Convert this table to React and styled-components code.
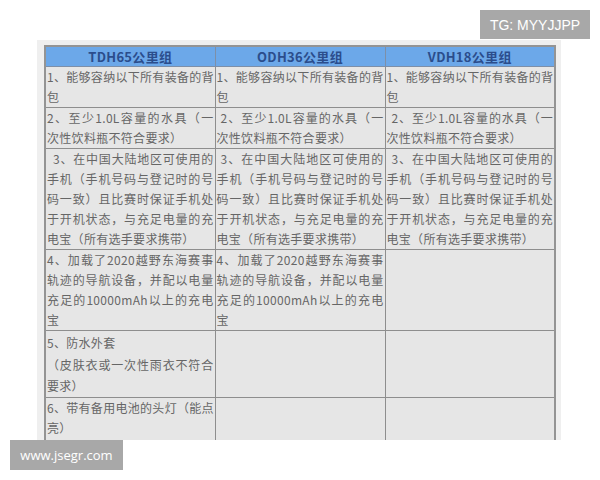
import React from "react";
import styled, { createGlobalStyle } from "styled-components";

const GlobalStyle = createGlobalStyle`
  html, body {
    margin: 0;
    padding: 0;
    background: #ffffff;
  }
  body {
    font-family: "Noto Sans CJK SC", "Noto Sans", sans-serif;
  }
`;

const columns = ["TDH65公里组", "ODH36公里组", "VDH18公里组"];

const bag = [["1、能够容纳以下所有装备的背", "包"]];
const water = [["2、至少1.0L容量的水具（一", "次性饮料瓶不符合要求）"]];
const phone = [
  [
    "3、在中国大陆地区可使用的",
    "手机（手机号码与登记时的号",
    "码一致）且比赛时保证手机处",
    "于开机状态，与充足电量的充",
    "电宝（所有选手要求携带）",
  ],
];
const nav = [
  [
    "4、加载了2020越野东海赛事",
    "轨迹的导航设备，并配以电量",
    "充足的10000mAh以上的充电",
    "宝",
  ],
];

// each cell: { text: paragraphs (array of lines), indent }
const rows = [
  [
    { text: bag, indent: 0 },
    { text: bag, indent: 0 },
    { text: bag, indent: 0 },
  ],
  [
    { text: water, indent: 0 },
    { text: water, indent: 4 },
    { text: water, indent: 5 },
  ],
  [
    { text: phone, indent: 6 },
    { text: phone, indent: 4 },
    { text: phone, indent: 5 },
  ],
  [{ text: nav, indent: 0 }, { text: nav, indent: 0 }, { text: [] }],
  [
    { text: [["5、防水外套"], ["（皮肤衣或一次性雨衣不符合", "要求）"]], indent: 0, loose: true },
    { text: [] },
    { text: [] },
  ],
  [
    { text: [["6、带有备用电池的头灯（能点", "亮）"]], indent: 0 },
    { text: [] },
    { text: [] },
  ],
];

const App = () => {
  return (
    <>
      <GlobalStyle />
      <Page>
        <Panel>
          <Table>
            <thead>
              <tr>
                {columns.map((c) => (
                  <HeadCell key={c}>{c}</HeadCell>
                ))}
              </tr>
            </thead>
            <tbody>
              {rows.map((row, i) => (
                <tr key={i}>
                  {row.map((cell, j) => (
                    <Cell key={j} $loose={cell.loose}>
                      {cell.text.map((para, p) =>
                        para.map((line, k) => (
                          <Line
                            key={p + "-" + k}
                            $last={k === para.length - 1}
                            $indent={k === 0 ? cell.indent : 0}
                          >
                            {line}
                          </Line>
                        ))
                      )}
                    </Cell>
                  ))}
                </tr>
              ))}
            </tbody>
          </Table>
        </Panel>
        <Badge>TG: MYYJJPP</Badge>
        <Watermark>www.jsegr.com</Watermark>
      </Page>
    </>
  );
};

//Styled Components

const Page = styled.div`
  position: relative;
  width: 600px;
  height: 480px;
  overflow: hidden;
  box-sizing: border-box;
  padding: 40px 0 0 37px;
`;

const Panel = styled.div`
  width: 524px;
  height: 400px;
  box-sizing: border-box;
  padding: 5px 0 0 7px;
  background: #efefef;
  overflow: hidden;
`;

const Table = styled.table`
  width: 512px;
  table-layout: fixed;
  border-collapse: collapse;
  border: 2px solid #949494;
  background: #e6e6e6;

  tbody tr:last-child td {
    padding-bottom: 16px;
  }
`;

const HeadCell = styled.th`
  height: 19px;
  padding: 0;
  background: #6ca8e9;
  border: 1px solid #7d8fa8;
  color: #2b4d8c;
  font-size: 13px;
  font-weight: 700;
  line-height: 19px;
  text-align: center;
  letter-spacing: 0.3px;
`;

const Cell = styled.td`
  vertical-align: top;
  padding: ${(p) => (p.$loose ? "1px 1px 0 1px" : "0 1px")};
  border: 1px solid #8e8e8e;
  color: #666666;
  font-size: 12px;
  line-height: ${(p) => (p.$loose ? "21.5px" : "20px")};
  letter-spacing: 0.3px;
`;

const Line = styled.span`
  display: block;
  text-indent: ${(p) => p.$indent}px;
  text-align: ${(p) => (p.$last ? "left" : "justify")};
  text-align-last: ${(p) => (p.$last ? "left" : "justify")};
  white-space: nowrap;
`;

const Badge = styled.div`
  position: absolute;
  top: 10px;
  right: 10px;
  width: 110px;
  height: 29px;
  display: flex;
  align-items: center;
  justify-content: center;
  background: #a8a8a8;
  color: #ffffff;
  font-family: "Liberation Sans", Arial, sans-serif;
  font-size: 14px;
`;

const Watermark = styled.div`
  position: absolute;
  left: 10px;
  top: 440px;
  width: 113px;
  height: 30px;
  display: flex;
  align-items: center;
  justify-content: center;
  background: #a8a8a8;
  color: #ffffff;
  font-family: "Open Sans", "Liberation Sans", sans-serif;
  font-size: 13px;
`;

export default App;
